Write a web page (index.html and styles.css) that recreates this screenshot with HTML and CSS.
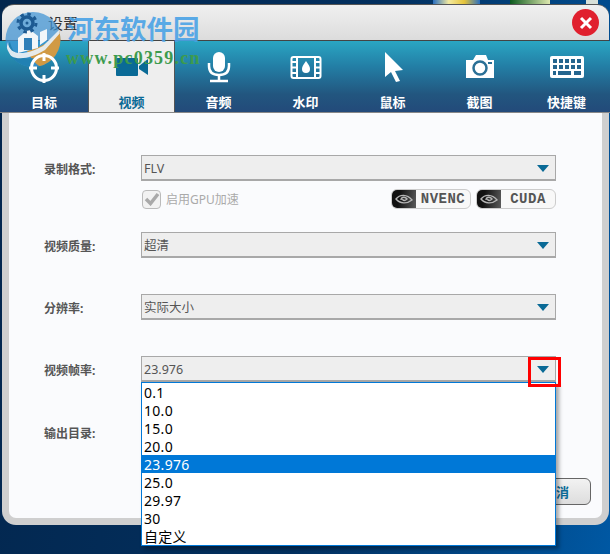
FILE: index.html
```html
<!DOCTYPE html>
<html lang="en">
<head>
    <meta charset="UTF-8">
    <meta name="viewport" content="width=device-width, initial-scale=1.0">
    <title>设置</title>
    <link rel="stylesheet" href="styles.css">
</head>
<body>
    <div class="desktop-bits">
        <span class="bit bit-a"></span>
        <span class="bit bit-b"></span>
        <span class="bit bit-c"></span>
    </div>
    <div class="window">
        <div class="titlebar">
            <span class="title">设置</span>
            <span class="close">
                <svg width="14" height="14" viewBox="0 0 14 14"><path d="M2 2 L12 12 M12 2 L2 12" stroke="#fff" stroke-width="3"/></svg>
            </span>
        </div>
        <div class="tabs">
            <div class="tab">
                <svg class="icon-top" width="32" height="32" viewBox="0 0 32 32" fill="none" stroke="#fff" stroke-width="3">
                    <circle cx="16" cy="17" r="12.500"/>
                    <path d="M16 2 V10 M16 24 V32 M1 17 H9 M23 17 H31"/>
                </svg>
                <span>目标</span>
            </div>
            <div class="tab active">
                <svg width="34" height="32" viewBox="0 0 34 32" fill="#0a6a96">
                    <rect x="1" y="7" width="22" height="18" rx="1"/>
                    <path d="M24 15 L33 8 V24 L24 18 Z"/>
                </svg>
                <span>视频</span>
            </div>
            <div class="tab">
                <svg width="32" height="32" viewBox="0 0 32 32" fill="none" stroke="#fff">
                    <rect x="10" y="1" width="12" height="20" rx="6" fill="#fff" stroke="none"/>
                    <path d="M6 12 V15 C6 21 10 24 16 24 C22 24 26 21 26 15 V12" stroke-width="2.500"/>
                    <path d="M16 24 V29 M7 30 H25" stroke-width="2.500"/>
                </svg>
                <span>音频</span>
            </div>
            <div class="tab">
                <svg width="32" height="32" viewBox="0 0 32 32">
                    <rect x="1.500" y="6" width="29" height="21" rx="2" fill="none" stroke="#fff" stroke-width="2"/>
                    <path d="M7 6 V27 M25 6 V27" stroke="#fff" stroke-width="2"/>
                    <path d="M2 11 H7 M2 16.500 H7 M2 22 H7 M25 11 H30 M25 16.500 H30 M25 22 H30" stroke="#fff" stroke-width="2"/>
                    <path d="M16 10 C13 14 12 16 12 18 A4 4 0 0 0 20 18 C20 16 19 14 16 10 Z" fill="#fff"/>
                </svg>
                <span>水印</span>
            </div>
            <div class="tab">
                <svg width="32" height="32" viewBox="0 0 32 32" fill="#fff">
                    <path d="M8 1 L26 19 L18 20 L23 30 L19 31 L14 21 L8 26 Z"/>
                </svg>
                <span>鼠标</span>
            </div>
            <div class="tab">
                <svg width="32" height="32" viewBox="0 0 32 32">
                    <path d="M2 9 H9 L12 4 H22 L24 9 H30 V27 H2 Z" fill="#fff"/>
                    <circle cx="16" cy="17" r="6.500" fill="none" stroke="#2a7096" stroke-width="2.500"/>
                    <rect x="24" y="11" width="4" height="2" fill="#2a7096"/>
                </svg>
                <span>截图</span>
            </div>
            <div class="tab">
                <svg width="36" height="32" viewBox="0 0 36 32">
                    <rect x="1" y="5" width="34" height="22" rx="2" fill="#fff"/>
                    <path d="M4 10 H33 M4 16 H33" stroke="#24658e" stroke-width="4" stroke-dasharray="4 2" fill="none"/>
                    <path d="M4 22 H7 M9 22 H22 M25 22 H32" stroke="#24658e" stroke-width="4" fill="none"/>
                </svg>
                <span>快捷键</span>
            </div>
        </div>
        <div class="frame">
            <div class="form">
                <div class="row">
                    <label>录制格式:</label>
                    <div class="select">FLV<i class="arrow"></i></div>
                </div>
                <div class="options">
                    <span class="checkbox">
                        <svg width="16" height="14" viewBox="0 0 16 14"><path d="M2 7 L6.500 11.500 L14 2" fill="none" stroke="#a9a9a9" stroke-width="3.500"/></svg>
                    </span>
                    <span class="check-text">启用GPU加速</span>
                    <span class="badge">
                        <span class="badge-logo">
                            <svg width="18" height="12" viewBox="0 0 18 12" fill="none" stroke="#b5b5b5" stroke-width="1.400"><path d="M1 6 C5 1 12 1 17 7 C12 11 5 11 1 6 Z"/><path d="M6 7 C6 4 10 3 12 6 C10 8 8 8 7.500 6"/></svg>
                        </span>
                        <span class="badge-text">NVENC</span>
                    </span>
                    <span class="badge">
                        <span class="badge-logo">
                            <svg width="18" height="12" viewBox="0 0 18 12" fill="none" stroke="#b5b5b5" stroke-width="1.400"><path d="M1 6 C5 1 12 1 17 7 C12 11 5 11 1 6 Z"/><path d="M6 7 C6 4 10 3 12 6 C10 8 8 8 7.500 6"/></svg>
                        </span>
                        <span class="badge-text">CUDA</span>
                    </span>
                </div>
                <div class="row row-quality">
                    <label>视频质量:</label>
                    <div class="select">超清<i class="arrow"></i></div>
                </div>
                <div class="row row-gap">
                    <label>分辨率:</label>
                    <div class="select">实际大小<i class="arrow"></i></div>
                </div>
                <div class="row row-gap">
                    <label>视频帧率:</label>
                    <div class="select">23.976<i class="arrow"></i></div>
                </div>
                <div class="row row-output">
                    <label>输出目录:</label>
                </div>
                <div class="buttons">
                    <button class="cancel">取消</button>
                </div>
            </div>
        </div>
    </div>

    <ul class="dropdown">
        <li>0.1</li>
        <li>10.0</li>
        <li>15.0</li>
        <li>20.0</li>
        <li class="selected">23.976</li>
        <li>25.0</li>
        <li>29.97</li>
        <li>30</li>
        <li>自定义</li>
    </ul>
    <div class="red-box"></div>

    <!-- site watermark over the screenshot -->
    <div class="watermark">
        <svg class="wm-logo" width="56" height="55" viewBox="0 0 56 55">
            <clipPath id="wm-disc"><circle cx="28" cy="27.500" r="27.500"/></clipPath>
            <g clip-path="url(#wm-disc)">
                <rect width="56" height="55" fill="#3f93d4" opacity="0.72"/>
                <path d="M56 18 C46 30 34 36 22 39 C26 46 32 55 38 55 H56 Z" fill="#d99a3c" opacity="0.95"/>
                <path d="M0 36 C-1 48 10 56 26 55 L30 46 C18 48 8 44 5 30 Z" fill="#1f7fb0" opacity="0.9"/>
                <path d="M3 30 C4 44 20 44 38 34 L56 16 V20 L40 38 C24 48 6 50 1 38 Z" fill="#e8eef2" opacity="0.95"/>
                <path d="M13 26 L24 17 L33 24 V36 L13 41 Z" fill="#f2f6f9"/>
                <rect x="19" y="26" width="8" height="12" fill="#2f7fb8"/>
                <path d="M35 20 L42 17 V28 L35 33 Z" fill="#f2f6f9"/>
            </g>
            <circle cx="22" cy="11" r="9" fill="none" stroke="#1d5a92" stroke-width="3" stroke-dasharray="3.500 3.570"/>
            <circle cx="22" cy="11" r="6" fill="none" stroke="#1d5a92" stroke-width="3.500"/>
            <circle cx="22" cy="11" r="1.500" fill="#1d5a92"/>
        </svg>
        <span class="wm-name">河东软件园</span>
        <span class="wm-url">www.pc0359.cn</span>
    </div>
</body>
</html>
```

FILE: styles.css
```css
html, body {
    margin: 0;
    padding: 0;
}
body {
    width: 610px;
    height: 554px;
    overflow: hidden;
    position: relative;
    font-family: "Noto Sans", "Noto Sans CJK SC", sans-serif;
    background: linear-gradient(100deg, #03264d 0%, #03305f 55%, #0058a3 100%);
}
.desktop-bits {
    height: 4px;
    display: flex;
}
.bit {
    display: block;
    height: 4px;
}
.bit-a {
    width: 47px;
    margin-left: 433px;
    background: linear-gradient(to right, #2a6fc0, #f2e9a0, #e6c43a, #2a6fc0);
}
.bit-b {
    width: 40px;
    margin-left: 30px;
    background: linear-gradient(to right, #0c5a1e, #dfe9b0);
}
.bit-c {
    width: 12px;
    margin-left: 36px;
    background: #d8e0d8;
}
.window {
    height: 521px;
}
.titlebar {
    height: 35px;
    margin: 0 1px 0 2px;
    background: linear-gradient(#f0f0f0, #dcdcdc);
    border-top: 1px solid #555;
    border-bottom: 1px solid #444;
    border-radius: 12px 12px 0 0;
    display: flex;
    align-items: center;
    justify-content: space-between;
    padding: 0 10px 0 46px;
}
.title {
    font-size: 15px;
    color: #333;
}
.close {
    width: 27px;
    height: 27px;
    border-radius: 50%;
    background: #e0202e;
    display: flex;
    align-items: center;
    justify-content: center;
}
.tabs {
    height: 71px;
    display: grid;
    grid-template-columns: 88px 87px 87px 87px 87px 87px 87px;
    background: linear-gradient(#2aa6c3 0%, #237fa6 35%, #22567f 75%, #234a7a 100%);
    border-bottom: 1px solid #888;
}
.tab {
    display: flex;
    flex-direction: column;
    align-items: center;
    padding-top: 10px;
    color: #fff;
    font-size: 13px;
    font-weight: bold;
    line-height: 16px;
    box-sizing: border-box;
}
.tab svg {
    display: block;
    margin-bottom: 11px;
}
.tab .icon-top {
    position: relative;
    z-index: 1;
}
.tab.active {
    background: #eeeeee;
    color: #0a6a96;
    border-left: 1px solid #555;
    border-right: 1px solid #555;
}
.frame {
    margin: 0 1px 0 2px;
    height: 412px;
    box-sizing: border-box;
    background: #fafbfd;
    border: 7px solid #cfcfcf;
    border-top: none;
    border-radius: 0 0 14px 14px;
}
.form {
    padding: 42px 0 0 35px;
}
.row {
    display: flex;
    align-items: center;
    height: 26px;
}
.row label {
    width: 97px;
    padding-top: 1px;
    font-size: 12px;
    font-weight: bold;
    color: #555;
}
.row-quality {
    margin-top: 23px;
}
.row-gap {
    margin-top: 36px;
}
.row-output {
    margin-top: 37px;
}
.select {
    width: 415px;
    height: 26px;
    box-sizing: border-box;
    position: relative;
    padding-left: 2px;
    background: #eeeeee;
    border: 1px solid #a8a8a8;
    border-bottom-width: 2px;
    font-size: 12.500px;
    line-height: 25px;
    color: #555;
}
.arrow {
    position: absolute;
    right: 6px;
    top: 9px;
    width: 0;
    height: 0;
    border-left: 6px solid transparent;
    border-right: 6px solid transparent;
    border-top: 7px solid #0a6a96;
}
.options {
    display: flex;
    align-items: center;
    height: 20px;
    margin: 8px 0 0 98px;
    width: 414px;
}
.checkbox {
    width: 19px;
    height: 19px;
    box-sizing: border-box;
    border: 1px solid #bbb;
    border-radius: 4px;
    background: #f2f2f2;
    display: flex;
    align-items: center;
    justify-content: center;
}
.check-text {
    margin-left: 5px;
    font-size: 12px;
    color: #aaa;
    flex: 1;
}
.badge {
    display: flex;
    width: 80px;
    height: 20px;
    margin-left: 5px;
    box-sizing: border-box;
    border: 1px solid #ccc;
    border-radius: 6px;
    overflow: hidden;
    background: #f8f8f8;
}
.badge:first-of-type {
    margin-left: 0;
}
.badge-logo {
    width: 24px;
    background: linear-gradient(100deg, #111 30%, #5c5c5c 100%);
    display: flex;
    align-items: center;
    justify-content: center;
}
.badge-text {
    flex: 1;
    text-align: center;
    font-family: "Liberation Mono", monospace;
    font-size: 14px;
    font-weight: bold;
    line-height: 19px;
    letter-spacing: 0.5px;
    color: #555;
}
.buttons {
    display: flex;
    justify-content: flex-end;
    margin-top: 33px;
    width: 547px;
}
.cancel {
    width: 70px;
    height: 27px;
    background: linear-gradient(#f2f2f2, #dddddd);
    border: 1px solid #666;
    border-radius: 6px;
    color: #0a6a96;
    font-family: inherit;
    font-size: 13px;
    font-weight: bold;
    padding: 0;
}
.dropdown {
    position: absolute;
    left: 141px;
    top: 382px;
    width: 415px;
    height: 164px;
    box-sizing: border-box;
    margin: 0;
    padding: 0;
    list-style: none;
    background: #fff;
    border: 1px solid #0078d7;
    box-shadow: 3px 3px 4px rgba(0, 0, 0, 0.35);
    font-size: 14px;
    letter-spacing: 0.3px;
    line-height: 18px;
    color: #000;
}
.dropdown li {
    height: 17px;
    padding: 1px 0 0 2px;
}
.dropdown .selected {
    background: #0078d7;
    color: #fff;
}
.red-box {
    position: absolute;
    left: 528px;
    top: 357px;
    width: 33px;
    height: 30px;
    box-sizing: border-box;
    border: 3px solid #f00;
}
.watermark {
    position: absolute;
    left: 5px;
    top: 11px;
    z-index: 0;
    width: 200px;
    height: 56px;
    pointer-events: none;
}
.wm-logo {
    position: absolute;
    left: 0;
    top: 1px;
}
.wm-name {
    position: absolute;
    left: 62px;
    top: 1px;
    font-size: 26.500px;
    font-weight: bold;
    line-height: 34px;
    color: #4aa3e6;
    opacity: 0.9;
    white-space: nowrap;
}
.wm-url {
    position: absolute;
    left: 61px;
    top: 37px;
    font-family: "Liberation Serif", serif;
    font-size: 18px;
    font-weight: bold;
    line-height: 20px;
    letter-spacing: 1.2px;
    color: #3d9b4e;
    white-space: nowrap;
}
```
